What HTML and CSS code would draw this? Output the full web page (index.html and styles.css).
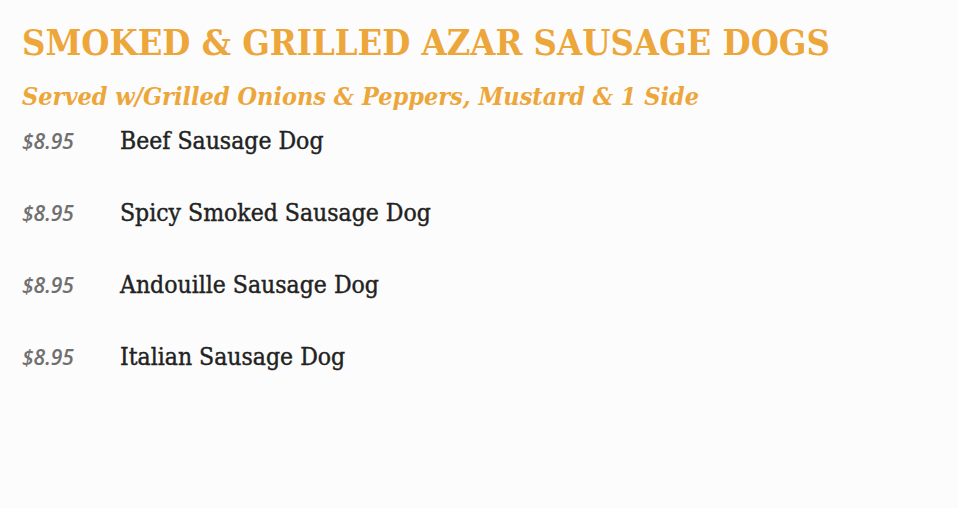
FILE: index.html
```html
<!DOCTYPE html>
<html>
<head>
<meta charset="utf-8">
<link rel="stylesheet" href="styles.css">
</head>
<body>
<section class="menu">
  <h1 class="title">SMOKED &amp; GRILLED AZAR SAUSAGE DOGS</h1>
  <h2 class="subtitle">Served w/Grilled Onions &amp; Peppers, Mustard &amp; 1 Side</h2>
  <ul class="items">
    <li class="item"><span class="price">$8.95</span><span class="name">Beef Sausage Dog</span></li>
    <li class="item"><span class="price">$8.95</span><span class="name">Spicy Smoked Sausage Dog</span></li>
    <li class="item"><span class="price">$8.95</span><span class="name">Andouille Sausage Dog</span></li>
    <li class="item"><span class="price">$8.95</span><span class="name">Italian Sausage Dog</span></li>
  </ul>
</section>
</body>
</html>
```
FILE: styles.css
```css
html, body {
  margin: 0;
  padding: 0;
  background: #fcfcfc;
}
.menu {
  padding: 20px 22px;
}
.title {
  margin: 0;
  font-family: "DejaVu Serif Condensed", "DejaVu Serif", serif;
  font-weight: bold;
  font-size: 36px;
  line-height: 44px;
  color: #eda63a;
}
.subtitle {
  margin: 18px 0 0;
  font-family: "DejaVu Serif Condensed", "DejaVu Serif", serif;
  font-weight: bold;
  font-style: italic;
  font-size: 25px;
  line-height: 30px;
  color: #eda63a;
}
.items {
  list-style: none;
  margin: 14px 0 0;
  padding: 0;
  display: flex;
  flex-direction: column;
  gap: 42px;
}
.item {
  display: flex;
  align-items: baseline;
  height: 30px;
  line-height: 30px;
}
.price {
  width: 98px;
  font-family: "Open Sans", sans-serif;
  font-style: italic;
  font-weight: 600;
  font-size: 21px;
  color: #707070;
}
.name {
  font-family: "DejaVu Serif Condensed", "DejaVu Serif", serif;
  font-size: 24.5px;
  color: #222;
  -webkit-text-stroke: 0.4px #222;
}
```
